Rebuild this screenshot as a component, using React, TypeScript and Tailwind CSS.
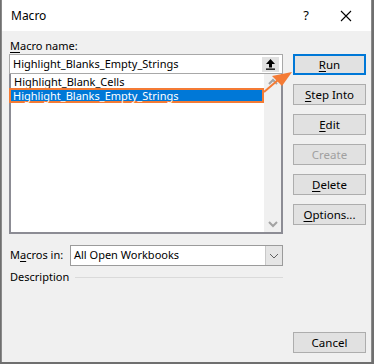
import React from 'react'

const font = { fontFamily: '"Noto Sans", "Open Sans", sans-serif' }

function Btn({ label, u, rest, primary, disabled }: { label?: string; u?: string; rest?: string; primary?: boolean; disabled?: boolean }) {
  return (
    <div
      className={
        'h-[21px] w-[73px] flex items-center justify-center bg-[#e1e1e1] text-[11.5px] ' +
        (primary ? 'border-2 border-[#0078d7] ' : 'border border-[#adadad] ') +
        (disabled ? 'text-[#a0a0a0]' : 'text-black')
      }
    >
      {u ? (
        <span>
          <span className="underline underline-offset-2">{u}</span>
          {rest}
        </span>
      ) : (
        <span>{label}</span>
      )}
    </div>
  )
}

export default function App() {
  return (
    <div className="w-[374px] h-[364px] bg-[#6f6f6f] pl-[1px] pr-[2px] pb-[2px] overflow-hidden" style={font}>
      <div className="relative w-full h-full flex flex-col bg-[#f0f0f0] border-l border-r border-[#8a8a8a]">
        {/* title bar */}
        <div className="h-[31px] bg-white flex items-center pl-[9px] text-[12px] text-black shrink-0">
          <span className="flex-1">Macro</span>
          <span className="w-[30px] text-center text-[13px] mr-[8px]">?</span>
          <span className="w-[34px] flex justify-center">
            <svg width="12" height="12" viewBox="0 0 12 12">
              <path d="M1 1 L11 11 M11 1 L1 11" stroke="#000" strokeWidth="1.1" />
            </svg>
          </span>
          <span className="w-[8px]" />
        </div>

        <div className="flex-1 flex pl-[7px] pt-[7px] gap-[10px]">
          {/* left column */}
          <div className="w-[274px] flex flex-col text-[11px] text-black">
            <div className="h-[16px] leading-[16px] pl-[1px]">
              <span className="underline underline-offset-2">M</span>acro name:
            </div>
            {/* name input */}
            <div className="h-[20px] border border-[#a8a8a8] bg-white flex items-center">
              <span className="flex-1 pl-[3px]">Highlight_Blanks_Empty_Strings</span>
              <span className="w-[17px] h-[15px] mr-[3px] bg-[#e1e1e1] flex items-center justify-center">
                <svg width="11" height="12" viewBox="0 0 11 12">
                  <path d="M5.5 1 L1 6 H4 V9.5 H7 V6 H10 Z" fill="#000" />
                  <rect x="1" y="10.5" width="9" height="1.3" fill="#000" />
                </svg>
              </span>
            </div>
            {/* list */}
            <div className="h-[160px] border-2 border-t-0 border-[#8c8c94] bg-white flex">
              <div className="flex-1 flex flex-col pt-[1px]">
                <div className="h-[13px] leading-[13px] pl-[3px]">Highlight_Blank_Cells</div>
                <div className="h-[15px] leading-[11px] pl-[2px] bg-[#0078d7] text-white border-2 border-[#f47b35] -ml-[2px]">
                  Highlight_Blanks_Empty_Strings
                </div>
              </div>
              <div className="w-[17px] bg-[#f0f0f0] flex flex-col justify-between items-center py-[4px]">
                <svg width="10" height="7" viewBox="0 0 10 7">
                  <path d="M1 6 L5 2 L9 6" stroke="#a3a3a3" strokeWidth="2" fill="none" />
                </svg>
                <svg width="10" height="7" viewBox="0 0 10 7">
                  <path d="M1 1 L5 5 L9 1" stroke="#a3a3a3" strokeWidth="2" fill="none" />
                </svg>
              </div>
            </div>
            {/* macros in */}
            <div className="flex items-center mt-[11px] h-[21px]">
              <span className="w-[61px] pl-[1px]">
                M<span className="underline underline-offset-2">a</span>cros in:
              </span>
              <div className="flex-1 h-[21px] border border-[#9b9b9b] bg-white flex items-center">
                <span className="flex-1 pl-[3px]">All Open Workbooks</span>
                <span className="w-[17px] h-full bg-[#e5e5e5] border-l border-[#c8c8c8] flex items-center justify-center">
                  <svg width="10" height="6" viewBox="0 0 10 6">
                    <path d="M1 1 L5 5 L9 1" stroke="#606060" strokeWidth="1" fill="none" />
                  </svg>
                </span>
              </div>
            </div>
            <div className="flex items-center mt-[3px] h-[16px] pl-[1px]">
              <span>Description</span>
              <span className="flex-1 ml-[6px] h-px bg-[#dadada]" />
            </div>
          </div>

          {/* right column */}
          <div className="flex flex-col pt-[16px]">
            <div className="flex flex-col gap-[9px]">
              <Btn u="R" rest="un" primary />
              <Btn u="S" rest="tep Into" />
              <Btn u="E" rest="dit" />
              <Btn label="Create" disabled />
              <Btn u="D" rest="elete" />
              <Btn u="O" rest="ptions..." />
            </div>
            <div className="mt-[107px]">
              <Btn label="Cancel" />
            </div>
          </div>
        </div>

        {/* callout arrow */}
        <svg className="absolute left-0 top-0 pointer-events-none" width="374" height="364">
          <path d="M262 92 L276 80" stroke="#f47b35" strokeWidth="2" fill="none" />
          <path d="M290 72 L270 76 L280 86 Z" fill="#f47b35" />
        </svg>
      </div>
    </div>
  )
}
